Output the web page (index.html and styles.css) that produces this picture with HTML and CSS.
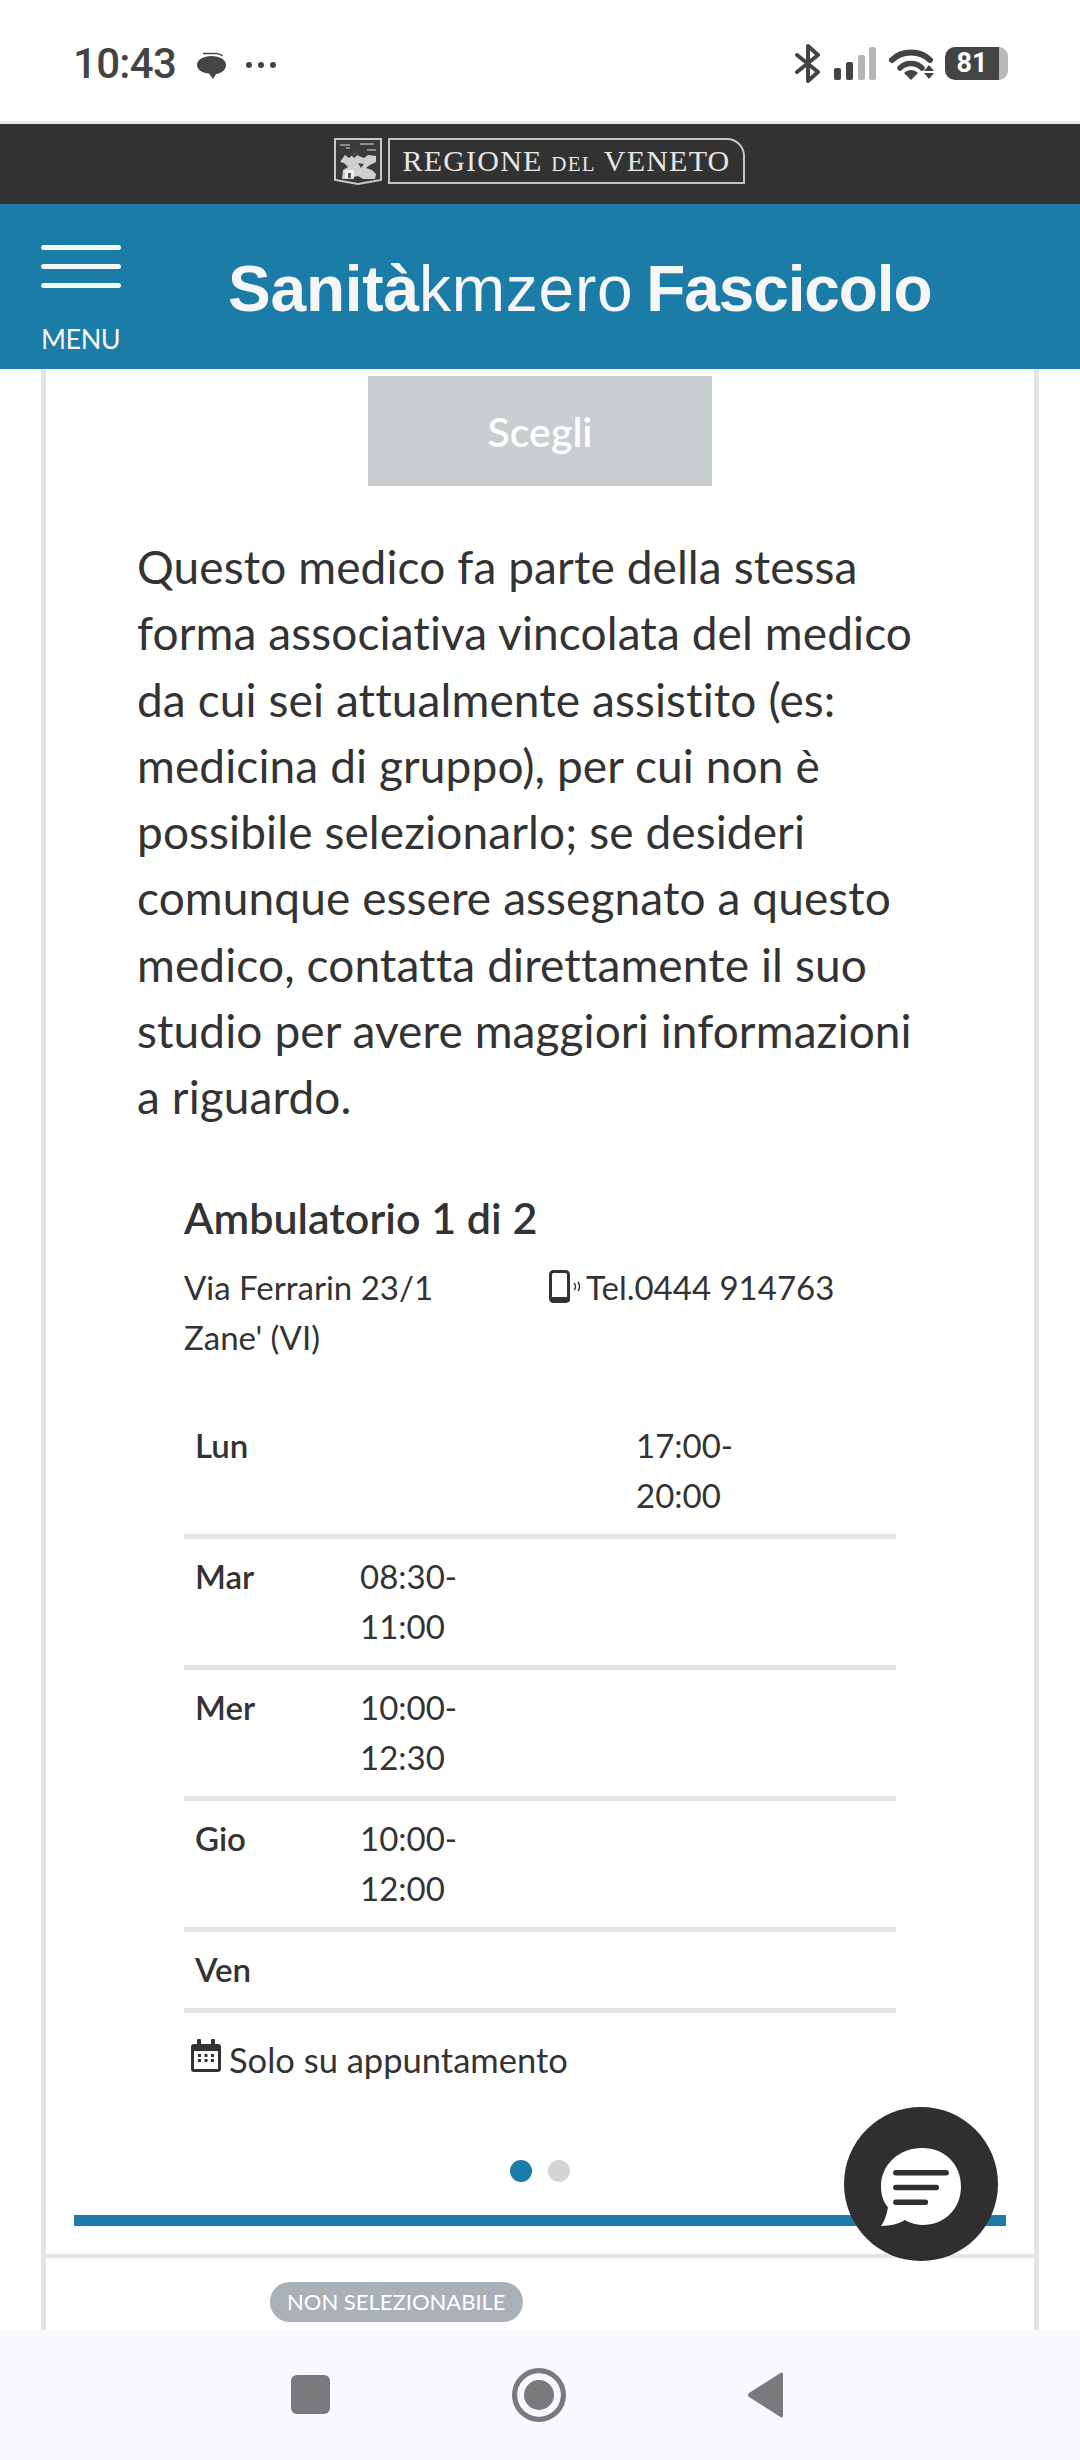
FILE: index.html
```html
<!DOCTYPE html>
<html lang="it">
<head>
<meta charset="utf-8">
<title>Sanitàkmzero Fascicolo</title>
<link rel="stylesheet" href="styles.css">
</head>
<body>
<div class="screen">
  <header class="statusbar">
    <div class="status-left">
      <span class="clock">10:43</span>
      <svg class="msg-icon" viewBox="0 0 29 28"><path d="M6 1.500h13c3 0 5 1 6.500 2.500" fill="none" stroke="#444" stroke-width="1.500"/><path d="M14.500 4C22.500 4 29 7.500 29 13c0 5-5 8.500-10 9l-3 5-4-5.500C6 21 0 18 0 13 0 7.500 6.500 4 14.500 4z" fill="#444"/></svg>
      <span class="more-dots"><i></i><i></i><i></i></span>
    </div>
    <div class="status-right">
      <svg class="bt-icon" viewBox="0 0 28 39"><path d="M3 11l21 17-10 9V2l10 9L3 28" fill="none" stroke="#444" stroke-width="4" stroke-linejoin="round" stroke-linecap="round"/></svg>
      <svg class="signal-icon" viewBox="0 0 42 33"><rect x="0" y="21" width="7" height="12" rx="2" fill="#444"/><rect x="12" y="15" width="7" height="18" rx="2" fill="#444"/><rect x="24" y="8" width="7" height="25" rx="2" fill="#b5b5b5"/><rect x="35" y="0" width="7" height="33" rx="2" fill="#b5b5b5"/></svg>
      <svg class="wifi-icon" viewBox="0 0 48 33"><path d="M3 13C13 3 31 3 41 13" fill="none" stroke="#444" stroke-width="6" stroke-linecap="round"/><path d="M11 21c6-6 16-6 22 0" fill="none" stroke="#444" stroke-width="5.500" stroke-linecap="round"/><path d="M15 26c4-4 10-4 14 0l-7 7z" fill="#444"/><path d="M40 18l5 6H35zM35 26h10l-5 6z" fill="#444"/></svg>
      <div class="battery"><span class="battery-level">81</span><span class="battery-cap"></span></div>
    </div>
  </header>

  <div class="region-bar">
    <div class="region-logo">
      <svg class="crest" viewBox="0 0 48 47">
        <path d="M1 1h46v41l-23 4L1 42z" fill="#3a3a3a" stroke="#c9c9c9" stroke-width="2"/>
        <path d="M6 24l5-7 4 3 6-5 4 3 5 2 4-3 8 1v6l-6 3-4 3 6 2 4 4-1 5H29l-5-3-4 1v2H8l1-9 5-3-4-4z" fill="#cfcfcf"/>
        <path d="M16 16l5-4 4 4-5 4zM24 25l6 1-3 4z" fill="#454545"/>
        <path d="M11 32h9v8h-9z" fill="#f2f2f2"/>
        <path d="M14 35h3v5h-3z" fill="#555"/>
        <path d="M6 7h10M12 10h4M26 6h14M33 12h9" stroke="#8a8a8a" stroke-width="2"/>
      </svg>
      <div class="wordmark">REGIONE <small>DEL</small> VENETO</div>
    </div>
  </div>

  <div class="appbar">
    <div class="menu-toggle">
      <span class="burger"></span>
      <span class="burger"></span>
      <span class="burger"></span>
      <span class="menu-label">MENU</span>
    </div>
    <div class="brand"><b class="brand-lead">Sanità</b><span class="brand-light">kmzero</span> <b>Fascicolo</b></div>
  </div>

  <main class="viewport">
    <section class="doctor-card">
      <button class="choose-btn" type="button">Scegli</button>
      <p class="notice">Questo medico fa parte della stessa forma associativa vincolata del medico da cui sei attualmente assistito (es: medicina di gruppo), per cui non è possibile selezionarlo; se desideri comunque essere assegnato a questo medico, contatta direttamente il suo studio per avere maggiori informazioni a riguardo.</p>

      <div class="clinic">
        <h2 class="clinic-title">Ambulatorio 1 di 2</h2>
        <div class="clinic-info">
          <div class="clinic-address">Via Ferrarin 23/1<br>Zane' (VI)</div>
          <div class="clinic-phone">
            <svg class="phone-icon" viewBox="0 0 34 33"><rect x="1.500" y="1.500" width="18" height="30" rx="3" fill="none" stroke="#333" stroke-width="3"/><rect x="1" y="27" width="20" height="5" rx="2" fill="#333"/><path d="M25 13a5 5 0 0 1 0 7M29 12a8 8 0 0 1 0 9" fill="none" stroke="#333" stroke-width="1.500"/></svg>
            <span>Tel.0444 914763</span>
          </div>
        </div>

        <div class="hours">
          <div class="hours-row"><span class="day">Lun</span><span class="slot"></span><span class="slot">17:00-<br>20:00</span></div>
          <div class="hours-row"><span class="day">Mar</span><span class="slot">08:30-<br>11:00</span><span class="slot"></span></div>
          <div class="hours-row"><span class="day">Mer</span><span class="slot">10:00-<br>12:30</span><span class="slot"></span></div>
          <div class="hours-row"><span class="day">Gio</span><span class="slot">10:00-<br>12:00</span><span class="slot"></span></div>
          <div class="hours-row"><span class="day">Ven</span><span class="slot"></span><span class="slot"></span></div>
        </div>

        <div class="appointment">
          <svg class="cal-icon" viewBox="0 0 30 33"><path d="M3 5h24a3 3 0 0 1 3 3v22a3 3 0 0 1-3 3H3a3 3 0 0 1-3-3V8a3 3 0 0 1 3-3z" fill="#333"/><rect x="6" y="0" width="4" height="7" rx="1" fill="#333"/><rect x="20" y="0" width="4" height="7" rx="1" fill="#333"/><rect x="3" y="12" width="24" height="18" fill="#fff"/><path d="M7 15h3v3H7zM13.500 15h3v3h-3zM20 15h3v3h-3zM7 20h3v3H7zM13.500 20h3v3h-3zM20 20h3v3h-3z" fill="#333"/></svg>
          <span>Solo su appuntamento</span>
        </div>
      </div>

      <div class="pager"><span class="dot active"></span><span class="dot"></span></div>
      <div class="accent-rule"></div>
    </section>

    <section class="next-card">
      <span class="badge">NON SELEZIONABILE</span>
    </section>

    <button class="chat-fab" type="button" aria-label="Chat">
      <svg viewBox="0 0 84 80"><path d="M44 1c22 0 39 16 39 39S66 79 44 79c-7 0-13-2-18-5-6 4-14 6-24 6 3-4 6-11 7-19C4 55 2 48 2 40 2 17 21 1 44 1z" fill="#fff"/><path d="M17 26h51M17 41h41M17 56h30" fill="none" stroke="#2f2f2f" stroke-width="5.500" stroke-linecap="round"/></svg>
    </button>
  </main>

  <nav class="navbar">
    <span class="nav-square"></span>
    <span class="nav-home"></span>
    <svg class="nav-back" viewBox="0 0 36 46"><path d="M35 2v42a1.500 1.500 0 0 1-2.500 1L1 25a2.500 2.500 0 0 1 0-4L32.500 1A1.500 1.500 0 0 1 35 2z" fill="#7a7a7c"/></svg>
  </nav>
</div>
</body>
</html>
```

FILE: styles.css
```css
* { box-sizing: border-box; }

html, body {
  margin: 0;
  padding: 0;
  background: #fff;
}

.screen {
  width: 1080px;
  height: 2460px;
  display: flex;
  flex-direction: column;
  overflow: hidden;
  font-family: Lato, "Liberation Sans", sans-serif;
  font-variant-ligatures: none;
  color: #333;
}

/* Status bar */
.statusbar {
  height: 124px;
  flex: none;
  display: flex;
  justify-content: space-between;
  padding: 44px 72px 0 73px;
  background: #fff;
  border-bottom: 3px solid #e8e8e8;
}

.status-left {
  display: flex;
  align-items: flex-start;
}

.clock {
  font: 500 42px/40px Roboto, sans-serif;
  color: #444;
  letter-spacing: -0.7px;
}

.msg-icon {
  width: 29px;
  height: 28px;
  margin: 8px 0 0 21px;
}

.more-dots {
  display: flex;
  gap: 6px;
  margin: 18px 0 0 20px;
}

.more-dots i {
  width: 6px;
  height: 6px;
  border-radius: 50%;
  background: #444;
}

.status-right {
  display: flex;
  align-items: flex-start;
}

.bt-icon {
  width: 28px;
  height: 39px;
}

.signal-icon {
  width: 42px;
  height: 33px;
  margin: 3px 0 0 12px;
}

.wifi-icon {
  width: 48px;
  height: 33px;
  margin: 3px 0 0 13px;
}

.battery {
  display: flex;
  align-items: center;
  margin: 3px 0 0 8px;
}

.battery-level {
  width: 54px;
  height: 33px;
  border-radius: 10px 0 0 10px;
  background: #444;
  color: #fff;
  font: 700 27px/33px Roboto, sans-serif;
  text-align: center;
}

.battery-cap {
  width: 9px;
  height: 33px;
  border-radius: 0 9px 9px 0;
  background: #b9b9b9;
}

/* Regional strip */
.region-bar {
  height: 80px;
  flex: none;
  display: flex;
  padding: 14px 0 0 334px;
  background: #323232;
}

.region-logo {
  display: flex;
  gap: 6px;
  height: 46px;
}

.crest {
  width: 48px;
  height: 47px;
}

.wordmark {
  width: 357px;
  height: 46px;
  border: 2px solid #c4c4c4;
  border-top-right-radius: 18px;
  font: 30px/42px "Liberation Serif", serif;
  letter-spacing: 1.2px;
  color: #e6e6e6;
  text-align: center;
  white-space: nowrap;
}

.wordmark small {
  font-size: 21px;
}

/* Application header */
.appbar {
  height: 165px;
  flex: none;
  display: flex;
  background: #1b7ca8;
  color: #f6f6f6;
  padding: 41px 0 0 41px;
}

.menu-toggle {
  width: 80px;
  display: flex;
  flex-direction: column;
}

.burger {
  height: 5px;
  margin-bottom: 14px;
  border-radius: 3px;
  background: #f6f6f6;
}

.menu-label {
  margin-top: 21px;
  font: 27px/32px Lato, sans-serif;
  letter-spacing: -0.5px;
}

.brand {
  margin: 9px 0 0 107px;
  font: 64px/70px "Liberation Sans", sans-serif;
  letter-spacing: -1.1px;
  white-space: nowrap;
}

.brand-lead {
  letter-spacing: -0.2px;
}

.brand-light {
  letter-spacing: 0.8px;
  margin-right: -4px;
}

/* Scrolling content */
.viewport {
  position: relative;
  flex: 1;
  min-height: 0;
  overflow: hidden;
  padding: 0 41px;
}

.doctor-card {
  height: 1889px;
  border: solid #e4e4e4;
  border-width: 0 5px 4px;
  padding: 7px 28px 0;
  display: flex;
  flex-direction: column;
}

.choose-btn {
  width: 344px;
  height: 110px;
  flex: none;
  align-self: center;
  border: 0;
  background: #c8cdd0;
  color: #fff;
  font: 600 41px Lato, sans-serif;
}

.notice {
  width: 790px;
  margin: 48px 0 0 63px;
  font-size: 46px;
  letter-spacing: 0.1px;
  line-height: 66.300px;
  color: #333;
}

.clinic {
  margin: 60px 0 0 110px;
  width: 712px;
}

.clinic-title {
  margin: 0;
  font-size: 43px;
  font-weight: 600;
  line-height: 54px;
  color: #333;
}

.clinic-info {
  display: flex;
  margin-top: 17px;
  font-size: 33px;
  line-height: 50px;
}

.clinic-address {
  width: 365px;
}

.clinic-phone {
  display: flex;
  align-items: flex-start;
  gap: 3px;
}

.phone-icon {
  width: 34px;
  height: 33px;
  margin-top: 8px;
}

.hours {
  margin-top: 46px;
  font-size: 33px;
  line-height: 50px;
}

.hours-row {
  display: grid;
  grid-template-columns: 165px 276px 1fr;
  padding: 12px 11px 14px;
  border-bottom: 5px solid #e4e4e4;
}

.day {
  font-weight: 600;
}

.appointment {
  display: flex;
  align-items: center;
  gap: 8px;
  margin: 22px 0 0 7px;
  font-size: 34.500px;
  line-height: 50px;
}

.cal-icon {
  width: 30px;
  height: 33px;
  margin-top: -8px;
}

.pager {
  display: flex;
  justify-content: center;
  gap: 16px;
  margin-top: 75px;
}

.dot {
  width: 22px;
  height: 22px;
  border-radius: 50%;
  background: #d4d4d4;
}

.dot.active {
  background: #1b7ca8;
}

.accent-rule {
  height: 11px;
  margin-top: 33px;
  background: #1b7ca8;
}

.next-card {
  height: 200px;
  border: solid #e4e4e4;
  border-width: 0 5px;
  padding: 24px 0 0 224px;
}

.badge {
  display: inline-block;
  height: 40px;
  padding: 0 17px;
  border-radius: 20px;
  background: #aab1b6;
  color: #fff;
  font-size: 22px;
  line-height: 40px;
}

.chat-fab {
  position: absolute;
  left: 844px;
  top: 1738px;
  width: 154px;
  height: 154px;
  padding: 40px 36px 35px 35px;
  border: 0;
  border-radius: 50%;
  background: #2f2f2f;
}

.chat-fab svg {
  display: block;
  width: 83px;
  height: 79px;
}

/* System navigation */
.navbar {
  height: 130px;
  flex: none;
  display: flex;
  background: #f7f9fe;
  padding: 38px 0 0 291px;
}

.nav-square {
  width: 39px;
  height: 39px;
  margin-top: 7px;
  border-radius: 6px;
  background: #7a7a7c;
}

.nav-home {
  width: 54px;
  height: 54px;
  margin-left: 182px;
  border: 5px solid #7a7a7c;
  border-radius: 50%;
  background: #7a7a7c;
  box-shadow: inset 0 0 0 7px #f7f9fe;
}

.nav-back {
  width: 36px;
  height: 46px;
  margin: 4px 0 0 182px;
}
```
